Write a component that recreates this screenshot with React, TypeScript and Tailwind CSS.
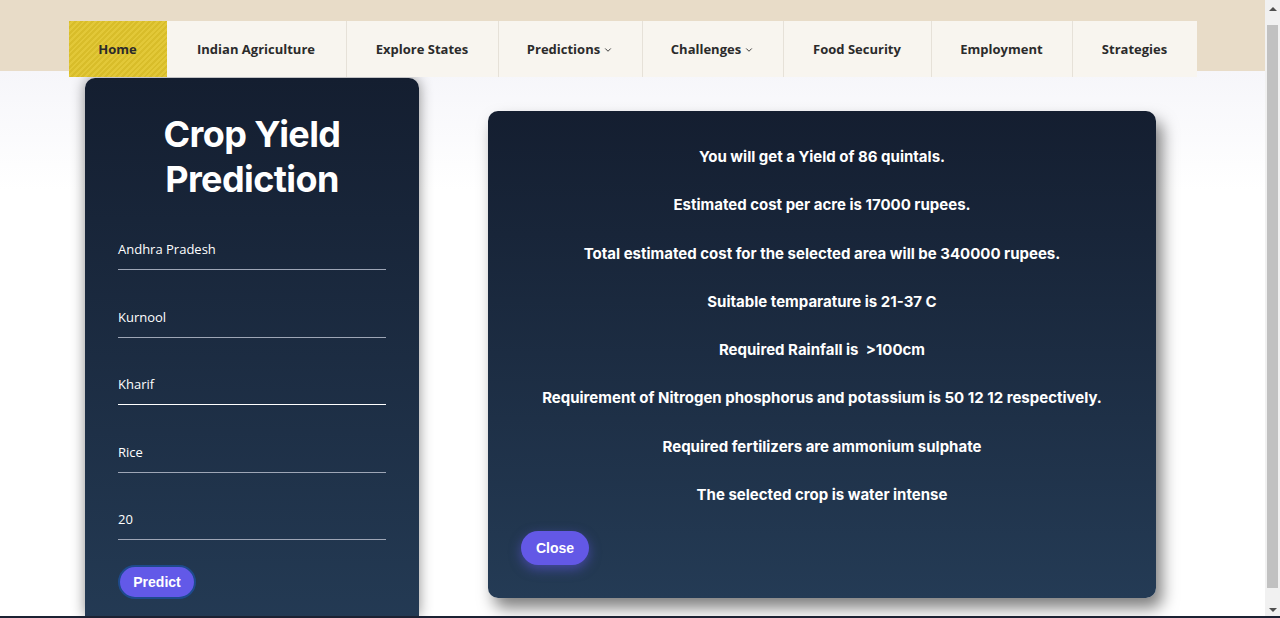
import React from 'react';
import { ChevronDown } from 'lucide-react';

const navItems = [
  { label: 'Home', w: 'w-[98px]', active: true },
  { label: 'Indian Agriculture', w: 'w-[179px]' },
  { label: 'Explore States', w: 'w-[152px]' },
  { label: 'Predictions', w: 'w-[144px]', drop: true },
  { label: 'Challenges', w: 'w-[141px]', drop: true },
  { label: 'Food Security', w: 'w-[148px]' },
  { label: 'Employment', w: 'w-[141px]' },
  { label: 'Strategies', w: 'w-[125px]' },
];

const fields = [
  { value: 'Andhra Pradesh' },
  { value: 'Kurnool' },
  { value: 'Kharif', focused: true },
  { value: 'Rice' },
  { value: '20' },
];

const results = [
  'You will get a Yield of 86 quintals.',
  'Estimated cost per acre is 17000 rupees.',
  'Total estimated cost for the selected area will be 340000 rupees.',
  'Suitable temparature is 21-37 C',
  'Required Rainfall is  >100cm',
  'Requirement of Nitrogen phosphorus and potassium is 50 12 12 respectively.',
  'Required fertilizers are ammonium sulphate',
  'The selected crop is water intense',
];

const Navbar: React.FC = () => (
  <div className="h-[71px] bg-[#e8dcc8] pt-[21px] relative z-10">
    <nav className="mx-auto flex h-[56px] w-[1128px] bg-[#f8f5ef] font-['Open_Sans',sans-serif]">
      {navItems.map((item, i) => (
        <div
          key={item.label}
          className={`${item.w} flex items-center justify-center gap-[3px] pt-[1px] text-[13px] font-bold text-[#2b2b2b] ${
            i > 1 ? 'border-l border-[#e6e1d8]' : ''
          } ${
            item.active
              ? 'bg-[repeating-linear-gradient(135deg,#d8bd2a_0px,#d8bd2a_2px,#e2c838_2px,#e2c838_4px)]'
              : ''
          }`}
        >
          {item.label}
          {item.drop && <ChevronDown size={10} strokeWidth={2.2} className="mt-[1px]" />}
        </div>
      ))}
    </nav>
  </div>
);

const App: React.FC = () => {
  return (
    <div className="flex h-[618px] flex-col overflow-hidden bg-white">
      <div className="flex min-h-0 flex-1">
        <div className="flex min-w-0 flex-1 flex-col">
          <Navbar />

          <div className="flex min-h-0 flex-1 gap-[69px] bg-gradient-to-b from-[#f6f6fa] to-white to-[120px] pl-[85px] pt-[7px]">
            {/* form card */}
            <div className="w-[334px] shrink-0 rounded-t-[10px] bg-gradient-to-b from-[#141e30] to-[#243b55] to-[560px] px-[33px] pt-[34px] shadow-[0_0_14px_rgba(0,0,0,0.45)]">
              <h1 className="text-center font-['Inter',sans-serif] text-[36px] font-bold leading-[45px] tracking-[-0.6px] text-white">
                Crop Yield
                <br />
                Prediction
              </h1>
              <div className="mt-[37px] flex flex-col gap-[36.5px] font-['Open_Sans',sans-serif]">
                {fields.map((f) => (
                  <div
                    key={f.value}
                    className={`h-[31px] border-b pb-[10px] text-[13px] leading-[20px] text-white ${
                      f.focused ? 'border-white' : 'border-[#9ea6b6]'
                    }`}
                  >
                    {f.value}
                  </div>
                ))}
              </div>
              <button className="mt-[25px] h-[34px] w-[78px] rounded-full border-2 border-[#1e4a8c] bg-[#6259e8] font-['Liberation_Sans',sans-serif] text-[14px] font-bold text-white">
                Predict
              </button>
            </div>

            {/* result card */}
            <div className="mt-[33px] h-[487px] w-[668px] shrink-0 rounded-[10px] bg-gradient-to-b from-[#141e30] to-[#243b55] px-[33px] pt-[34px] shadow-[6px_10px_16px_rgba(0,0,0,0.5)]">
              <div className="flex flex-col gap-[24.3px] text-center font-['Inter',sans-serif] text-[15px] font-bold leading-[24px] text-white">
                {results.map((r) => (
                  <p key={r} className="whitespace-pre">
                    {r}
                  </p>
                ))}
              </div>
              <button className="mt-[24px] h-[34px] w-[68px] rounded-full bg-[#6358e6] font-['Liberation_Sans',sans-serif] text-[14px] font-bold text-white shadow-[0_4px_12px_rgba(99,88,230,0.55)]">
                Close
              </button>
            </div>
          </div>
        </div>

        {/* scrollbar */}
        <div className="flex w-[15px] shrink-0 flex-col bg-[#f1f1f1]">
          <div className="flex h-[17px] items-center justify-center">
            <div className="h-0 w-0 border-x-[4px] border-b-[4px] border-x-transparent border-b-[#505050]" />
          </div>
          <div className="mx-[2px] mt-[8px] h-[563px] bg-[#c1c1c1]" />
          <div className="flex flex-1 items-end justify-center pb-[4px]">
            <div className="h-0 w-0 border-x-[4px] border-t-[4px] border-x-transparent border-t-[#505050]" />
          </div>
        </div>
      </div>
      <div className="h-[2px] bg-[#1c2233]" />
    </div>
  );
};

export default App;
